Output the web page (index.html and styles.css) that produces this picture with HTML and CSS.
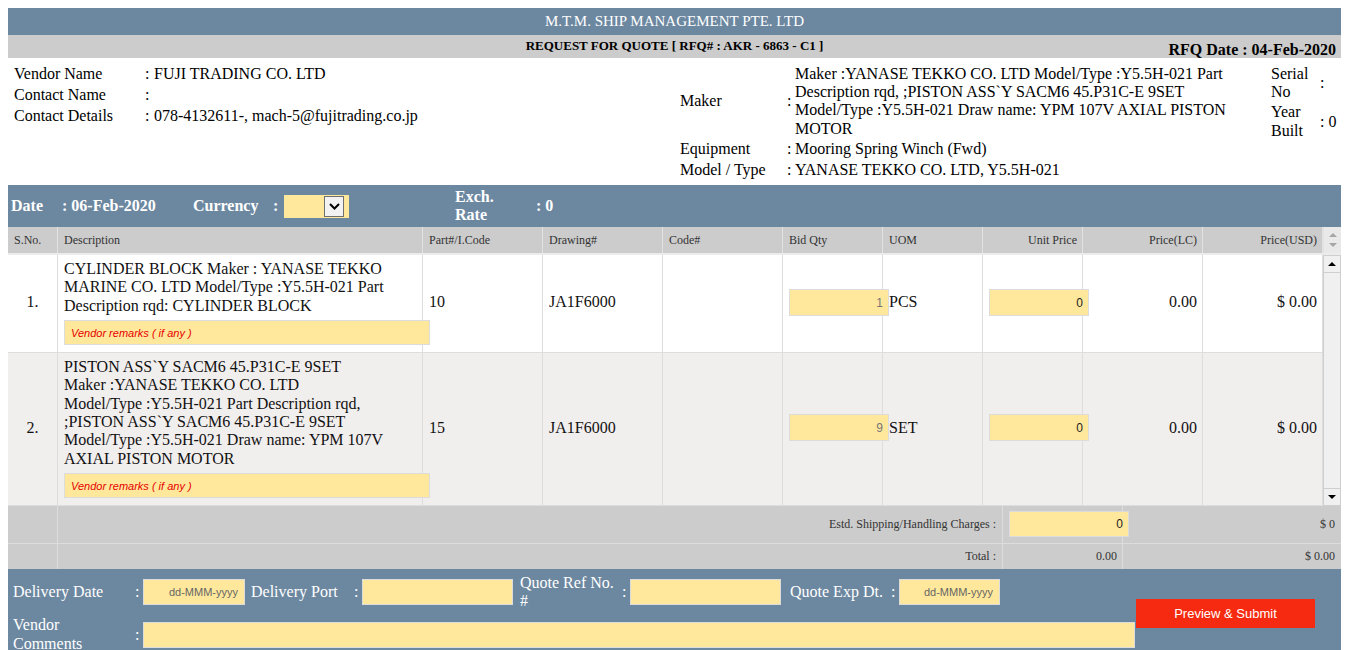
FILE: index.html
```html
<!DOCTYPE html>
<html>
<head>
<meta charset="utf-8">
<title>RFQ</title>
<link rel="stylesheet" href="styles.css">
</head>
<body>
<div class="page">
  <div class="title">M.T.M. SHIP MANAGEMENT PTE. LTD</div>
  <div class="subbar">
    <span class="rfq">REQUEST FOR QUOTE [ RFQ# : AKR - 6863 - C1 ]</span>
    <span class="rfqdate">RFQ Date : 04-Feb-2020</span>
  </div>

  <div class="info">
    <div class="vendor">
      <div class="kv">
        <div>Vendor Name</div><div>:</div><div>FUJI TRADING CO. LTD</div>
        <div>Contact Name</div><div>:</div><div></div>
        <div>Contact Details</div><div>:</div><div>078-4132611-, mach-5@fujitrading.co.jp</div>
      </div>
    </div>
    <div class="maker">
      <div class="lbl">Maker</div><div class="col">:</div><div>Maker :YANASE TEKKO CO. LTD Model/Type :Y5.5H-021 Part Description rqd, ;PISTON ASS`Y SACM6 45.P31C-E 9SET Model/Type :Y5.5H-021 Draw name: YPM 107V AXIAL PISTON MOTOR</div>
      <div class="lbl">Equipment</div><div class="col">:</div><div>Mooring Spring Winch (Fwd)</div>
      <div class="lbl">Model / Type</div><div class="col">:</div><div>YANASE TEKKO CO. LTD, Y5.5H-021</div>
    </div>
    <div class="serial">
      <div>Serial No</div><div class="sv">:</div>
      <div>Year Built</div><div class="sv">: 0</div>
    </div>
  </div>

  <div class="datebar">
    <div class="d-label">Date</div>
    <div class="d-val">: 06-Feb-2020</div>
    <div class="d-cur">Currency</div>
    <div class="d-colon">:</div>
    <div class="select">
      <div class="selbtn">
        <svg width="11" height="7" viewBox="0 0 11 7"><path d="M1 1 L5.5 5.5 L10 1" fill="none" stroke="#000" stroke-width="2"/></svg>
      </div>
    </div>
    <div class="d-exch">Exch. Rate</div>
    <div class="d-rate">: 0</div>
  </div>

  <div class="thead">
    <div class="cols hrow">
      <div>S.No.</div>
      <div>Description</div>
      <div>Part#/I.Code</div>
      <div>Drawing#</div>
      <div>Code#</div>
      <div>Bid Qty</div>
      <div>UOM</div>
      <div class="r">Unit Price</div>
      <div class="r">Price(LC)</div>
      <div class="r">Price(USD)</div>
    </div>
    <div class="hscroll">
      <span class="tri up grey"></span>
      <span class="tri down grey"></span>
    </div>
  </div>

  <div class="tbody">
    <div class="rows">
      <div class="cols brow">
        <div class="c">1.</div>
        <div class="desc">
          <div>CYLINDER BLOCK Maker : YANASE TEKKO MARINE CO. LTD Model/Type :Y5.5H-021 Part Description rqd: CYLINDER BLOCK</div>
          <input class="remarks" type="text" placeholder="Vendor remarks ( if any )">
        </div>
        <div>10</div>
        <div>JA1F6000</div>
        <div></div>
        <div><input class="num qty" type="text" value="1"></div>
        <div>PCS</div>
        <div><input class="num" type="text" value="0"></div>
        <div class="r">0.00</div>
        <div class="r">$ 0.00</div>
      </div>
      <div class="cols brow alt">
        <div class="c">2.</div>
        <div class="desc">
          <div>PISTON ASS`Y SACM6 45.P31C-E 9SET<br>Maker :YANASE TEKKO CO. LTD<br>Model/Type :Y5.5H-021 Part Description rqd,<br>;PISTON ASS`Y SACM6 45.P31C-E 9SET<br>Model/Type :Y5.5H-021 Draw name: YPM 107V<br>AXIAL PISTON MOTOR</div>
          <input class="remarks" type="text" placeholder="Vendor remarks ( if any )">
        </div>
        <div>15</div>
        <div>JA1F6000</div>
        <div></div>
        <div><input class="num qty" type="text" value="9"></div>
        <div>SET</div>
        <div><input class="num" type="text" value="0"></div>
        <div class="r">0.00</div>
        <div class="r">$ 0.00</div>
      </div>
    </div>
    <div class="vscroll">
      <div class="vbtn vup"><span class="tri up"></span></div>
      <div class="vbtn vdown"><span class="tri down"></span></div>
    </div>
  </div>

  <div class="totals">
    <div class="trow first">
      <div></div>
      <div class="tl">Estd. Shipping/Handling Charges :</div>
      <div class="tin"><input class="num ship" type="text" value="0"></div>
      <div class="tl">$ 0</div>
    </div>
    <div class="trow second">
      <div></div>
      <div class="tl">Total :</div>
      <div class="tl t3">0.00</div>
      <div class="tl">$ 0.00</div>
    </div>
  </div>

  <div class="footer">
    <div class="ffields">
      <div class="frow">
        <div class="f-l1">Delivery Date</div>
        <div class="f-c1">:</div>
        <input class="fin date" type="text" placeholder="dd-MMM-yyyy">
        <div class="f-l2">Delivery Port</div>
        <div class="f-c2">:</div>
        <input class="fin w151" type="text">
        <div class="f-l3">Quote Ref No. #</div>
        <div class="f-c3">:</div>
        <input class="fin w151" type="text">
        <div class="f-l4">Quote Exp Dt.</div>
        <div class="f-c4">:</div>
        <input class="fin date d2" type="text" placeholder="dd-MMM-yyyy">
      </div>
      <div class="frow">
        <div class="f-l1">Vendor Comments</div>
        <div class="f-c1">:</div>
        <input class="fin comments" type="text">
      </div>
    </div>
    <button class="submit" type="button">Preview &amp; Submit</button>
  </div>
</div>
</body>
</html>
```

FILE: styles.css
```css
* { box-sizing: border-box; }

body {
  margin: 8px;
  font-family: "Liberation Serif", "Times New Roman", serif;
  color: #000;
  background: #fff;
}

.page { width: 1333px; }

.title {
  background: #6c87a0;
  color: #fff;
  font-size: 15px;
  height: 27px;
  line-height: 27px;
  text-align: center;
}

.subbar {
  background: #cccccc;
  height: 23px;
  display: grid;
  grid-template-columns: 1fr auto 1fr;
  align-items: center;
}
.subbar .rfq {
  grid-column: 2;
  font-size: 13px;
  font-weight: bold;
  padding-bottom: 1px;
}
.subbar .rfqdate {
  grid-column: 3;
  justify-self: end;
  align-self: end;
  font-size: 16px;
  font-weight: bold;
  line-height: 16px;
  padding-right: 5px;
}

/* info block */
.info {
  height: 127px;
  padding: 5.5px 0 0 6px;
  display: flex;
  align-items: flex-start;
  font-size: 16px;
  line-height: 18.4px;
}
.vendor { width: 666px; }
.kv {
  display: grid;
  grid-template-columns: 131px 9px 1fr;
}
.kv > div { padding: 1.3px 0; }

.maker {
  width: 555px;
  display: grid;
  grid-template-columns: 107px 8px 440px;
}
.maker > div { padding: 1px 0; }
.maker .lbl, .maker .col { align-self: center; }

.serial {
  margin-left: 36px;
  display: grid;
  grid-template-columns: 45px 25px;
}
.serial > div { padding: 1px 0; }
.serial .sv { align-self: center; padding-left: 4px; }

/* date bar */
.datebar {
  background: #6c87a0;
  height: 42px;
  display: flex;
  align-items: center;
  color: #fff;
  font-weight: bold;
  font-size: 16px;
  line-height: 18.4px;
}
.d-label { width: 54px; padding-left: 3px; }
.d-val { width: 131px; }
.d-cur { width: 80px; }
.d-colon { width: 11px; }
.select {
  width: 65px;
  height: 23px;
  margin-right: 106px;
  background: #ffe89b;
  display: flex;
  align-items: center;
  justify-content: flex-end;
  padding-right: 5px;
}
.selbtn {
  width: 20px;
  height: 21px;
  border: 1px solid #707070;
  background: #f2f2f2;
  display: flex;
  align-items: center;
  justify-content: center;
}
.d-exch { width: 60px; margin-right: 21px; }

/* table */
.cols {
  display: grid;
  grid-template-columns: 50px 365px 120px 120px 120px 100px 100px 100px 120px 120px;
  width: 1315px;
}

.thead {
  display: flex;
  background: #cccccc;
  height: 26px;
}
.hrow { font-size: 12px; color: #333; }
.hrow > div {
  border-right: 1px solid #e2e2e2;
  padding: 0 6px;
  display: flex;
  align-items: center;
}
.hrow > div.r { justify-content: flex-end; padding-right: 5px; }
.hscroll {
  width: 18px;
  background: #e9e9e9;
  border-left: 1px solid #e2e2e2;
  display: flex;
  flex-direction: column;
  align-items: center;
  justify-content: space-around;
  padding: 3px 0;
}

.tri { display: block; width: 0; height: 0; border-left: 4px solid transparent; border-right: 4px solid transparent; }
.tri.up { border-bottom: 4px solid #000; }
.tri.down { border-top: 4px solid #000; }
.tri.grey.up { border-bottom-color: #a6a6a6; }
.tri.grey.down { border-top-color: #a6a6a6; }

.tbody {
  display: flex;
  border-top: 2px solid #ececec;
}
.rows { width: 1315px; }
.brow {
  border-bottom: 1px solid #dddddd;
  background: #fff;
  font-size: 16px;
  line-height: 18.4px;
  color: #111;
}
.brow.alt { background: #f1eeee; }
.brow > div {
  border-right: 1px solid #dddddd;
  padding: 5px 6px 6.5px;
  display: flex;
  align-items: center;
  min-width: 0;
}
.brow > div.c { justify-content: center; }
.brow > div.r { justify-content: flex-end; padding-right: 5px; }
.brow > div.desc {
  flex-direction: column;
  align-items: flex-start;
  justify-content: flex-start;
}

input {
  font-family: "Liberation Sans", Arial, sans-serif;
  font-size: 11px;
  background: #ffe89b;
  border: 1px solid #dcdcdc;
  outline: none;
  margin: 0;
  color: #222;
}
input::placeholder { color: #666; }

.remarks {
  width: 366px;
  height: 25px;
  margin-top: 5px;
  padding: 0 6px;
  flex: none;
}
.remarks::placeholder { color: #e60000; font-style: italic; }

.num {
  width: 100px;
  height: 27px;
  text-align: right;
  padding: 0 5px;
  font-size: 12px;
  flex: none;
}
.num.qty { color: #777; }

.vscroll {
  width: 18px;
  border: 1px solid #cfcfcf;
  background: #f0f0f0;
  display: flex;
  flex-direction: column;
  justify-content: space-between;
}
.vbtn {
  height: 17px;
  display: flex;
  align-items: center;
  justify-content: center;
}
.vup { border-bottom: 1px solid #cfcfcf; }
.vdown { border-top: 1px solid #cfcfcf; }

/* totals */
.totals {
  background: #cccccc;
  font-size: 12px;
  color: #333;
}
.trow {
  display: grid;
  grid-template-columns: 50px 945px 120px 218px;
}
.trow > div {
  border-right: 1px solid #dddddd;
  display: flex;
  align-items: center;
}
.trow > div:last-child { border-right: none; }
.trow .tl { justify-content: flex-end; padding-right: 6px; }
.trow .t3 { padding-right: 5px; }
.trow .tin { padding-left: 6px; }
.trow.first { height: 38px; border-bottom: 1px solid #dddddd; }
.trow.second { height: 25px; }
.num.ship { width: 120px; height: 26px; }

/* footer */
.footer {
  background: #6c87a0;
  color: #fff;
  font-size: 16px;
  line-height: 18.4px;
  display: flex;
  align-items: center;
  padding: 5px 0 8px;
}
.ffields {
  width: 1128px;
  display: flex;
  flex-direction: column;
  gap: 6px;
}
.frow {
  display: flex;
  align-items: center;
  min-height: 36.8px;
}
.frow > div { flex: none; }
.f-l1 { width: 122px; padding-left: 5px; }
.f-c1 { width: 13px; padding-left: 5px; }
.f-l2 { width: 105px; padding-left: 6px; white-space: nowrap; }
.f-c2 { width: 12px; padding-left: 4px; }
.f-l3 { width: 104px; padding-left: 7px; }
.f-c3 { width: 13px; padding-left: 5px; }
.f-l4 { width: 106px; padding-left: 9px; white-space: nowrap; }
.f-c4 { width: 12px; padding-left: 4px; }

.fin {
  height: 26px;
  padding: 0 6px;
  flex: none;
}
.fin.date { width: 102px; text-align: right; }
.fin.d2 { width: 101px; }
.fin.w151 { width: 151px; }
.fin.comments { width: 992px; }

.submit {
  width: 179px;
  height: 29px;
  background: #f52a10;
  color: #fff;
  border: none;
  font-family: "Liberation Sans", Arial, sans-serif;
  font-size: 13px;
  padding: 0;
  margin-left: 0;
}
```
